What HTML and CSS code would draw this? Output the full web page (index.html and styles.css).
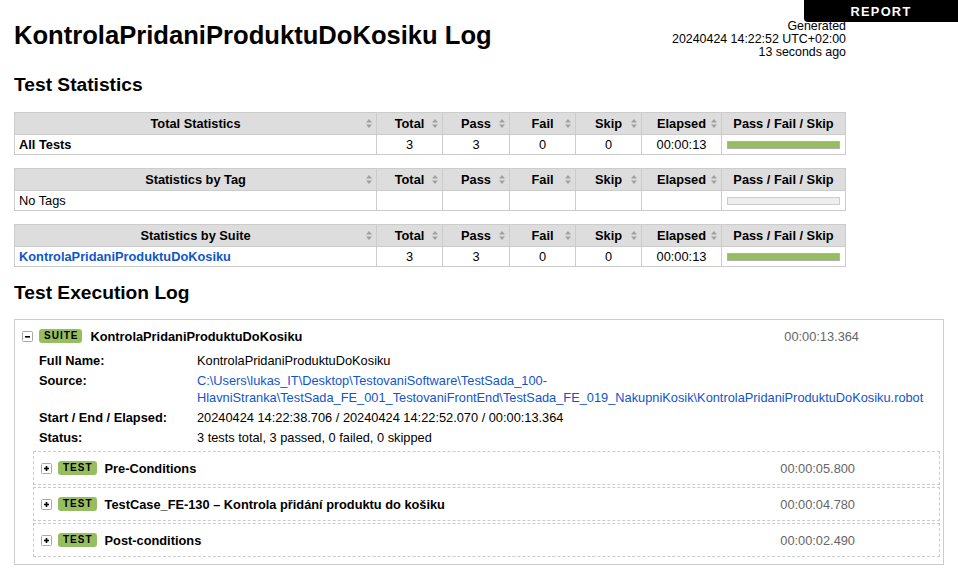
FILE: index.html
```html
<!DOCTYPE html>
<html lang="en">
<head>
<meta charset="utf-8">
<title>KontrolaPridaniProduktuDoKosiku Log</title>
<link rel="stylesheet" href="styles.css">
</head>
<body>
<div class="top-right"><a href="#" class="report-link">REPORT</a></div>

<header class="header">
  <h1 class="title">KontrolaPridaniProduktuDoKosiku Log</h1>
  <div class="generated">
    <div>Generated</div>
    <div>20240424 14:22:52 UTC+02:00</div>
    <div>13 seconds ago</div>
  </div>
</header>

<h2 class="section-title">Test Statistics</h2>

<table class="statistics">
  <colgroup><col><col class="c-total"><col class="c-pass"><col class="c-fail"><col class="c-skip"><col class="c-elapsed"><col class="c-graph"></colgroup>
  <thead>
    <tr><th class="sortable">Total Statistics</th><th class="sortable">Total</th><th class="sortable">Pass</th><th class="sortable">Fail</th><th class="sortable">Skip</th><th class="sortable">Elapsed</th><th>Pass / Fail / Skip</th></tr>
  </thead>
  <tbody>
    <tr><td class="stat-name bold">All Tests</td><td class="num">3</td><td class="num">3</td><td class="num">0</td><td class="num">0</td><td class="num">00:00:13</td><td class="graph-cell"><div class="graph pass"></div></td></tr>
  </tbody>
</table>

<table class="statistics">
  <colgroup><col><col class="c-total"><col class="c-pass"><col class="c-fail"><col class="c-skip"><col class="c-elapsed"><col class="c-graph"></colgroup>
  <thead>
    <tr><th class="sortable">Statistics by Tag</th><th class="sortable">Total</th><th class="sortable">Pass</th><th class="sortable">Fail</th><th class="sortable">Skip</th><th class="sortable">Elapsed</th><th>Pass / Fail / Skip</th></tr>
  </thead>
  <tbody>
    <tr><td class="stat-name">No Tags</td><td class="num"></td><td class="num"></td><td class="num"></td><td class="num"></td><td class="num"></td><td class="graph-cell"><div class="graph empty"></div></td></tr>
  </tbody>
</table>

<table class="statistics">
  <colgroup><col><col class="c-total"><col class="c-pass"><col class="c-fail"><col class="c-skip"><col class="c-elapsed"><col class="c-graph"></colgroup>
  <thead>
    <tr><th class="sortable">Statistics by Suite</th><th class="sortable">Total</th><th class="sortable">Pass</th><th class="sortable">Fail</th><th class="sortable">Skip</th><th class="sortable">Elapsed</th><th>Pass / Fail / Skip</th></tr>
  </thead>
  <tbody>
    <tr><td class="stat-name"><a href="#" class="link bold">KontrolaPridaniProduktuDoKosiku</a></td><td class="num">3</td><td class="num">3</td><td class="num">0</td><td class="num">0</td><td class="num">00:00:13</td><td class="graph-cell"><div class="graph pass"></div></td></tr>
  </tbody>
</table>

<h2 class="section-title log-title">Test Execution Log</h2>

<div class="suite">
  <div class="element-header">
    <svg class="toggle" width="11" height="11" viewBox="0 0 11 11"><rect x="0.5" y="0.5" width="10" height="10" rx="1" fill="#fff" stroke="#a8a8a8"/><rect x="3" y="5" width="5" height="1.6" fill="#000"/></svg>
    <span class="label pass">SUITE</span>
    <span class="name">KontrolaPridaniProduktuDoKosiku</span>
    <span class="elapsed">00:00:13.364</span>
  </div>
  <table class="metadata">
    <tr><th>Full Name:</th><td>KontrolaPridaniProduktuDoKosiku</td></tr>
    <tr><th>Source:</th><td><a href="#" class="link">C:\Users\lukas_IT\Desktop\TestovaniSoftware\TestSada_100-HlavniStranka\TestSada_FE_001_TestovaniFrontEnd\TestSada_FE_019_NakupniKosik\KontrolaPridaniProduktuDoKosiku.robot</a></td></tr>
    <tr><th>Start / End / Elapsed:</th><td>20240424 14:22:38.706 / 20240424 14:22:52.070 / 00:00:13.364</td></tr>
    <tr><th>Status:</th><td>3 tests total, 3 passed, 0 failed, 0 skipped</td></tr>
  </table>
  <div class="children">
    <div class="test">
      <div class="element-header">
        <svg class="toggle" width="11" height="11" viewBox="0 0 11 11"><rect x="0.5" y="0.5" width="10" height="10" rx="1" fill="#fff" stroke="#a8a8a8"/><rect x="3" y="4.7" width="5" height="1.6" fill="#000"/><rect x="4.7" y="3" width="1.6" height="5" fill="#000"/></svg>
        <span class="label pass">TEST</span>
        <span class="name">Pre-Conditions</span>
        <span class="elapsed">00:00:05.800</span>
      </div>
    </div>
    <div class="test">
      <div class="element-header">
        <svg class="toggle" width="11" height="11" viewBox="0 0 11 11"><rect x="0.5" y="0.5" width="10" height="10" rx="1" fill="#fff" stroke="#a8a8a8"/><rect x="3" y="4.7" width="5" height="1.6" fill="#000"/><rect x="4.7" y="3" width="1.6" height="5" fill="#000"/></svg>
        <span class="label pass">TEST</span>
        <span class="name">TestCase_FE-130 – Kontrola přidání produktu do košiku</span>
        <span class="elapsed">00:00:04.780</span>
      </div>
    </div>
    <div class="test">
      <div class="element-header">
        <svg class="toggle" width="11" height="11" viewBox="0 0 11 11"><rect x="0.5" y="0.5" width="10" height="10" rx="1" fill="#fff" stroke="#a8a8a8"/><rect x="3" y="4.7" width="5" height="1.6" fill="#000"/><rect x="4.7" y="3" width="1.6" height="5" fill="#000"/></svg>
        <span class="label pass">TEST</span>
        <span class="name">Post-conditions</span>
        <span class="elapsed">00:00:02.490</span>
      </div>
    </div>
  </div>
</div>
</body>
</html>
```
FILE: styles.css
```css
html, body {
  margin: 0;
  padding: 0;
}
body {
  background: #fff;
  color: #000;
  font-family: "Liberation Sans", Arial, Helvetica, sans-serif;
  font-size: 12.8px;
  line-height: 15px;
  padding: 0 14px 14px 14px;
}
a.link {
  color: #15c;
  text-decoration: none;
}
.bold {
  font-weight: bold;
}

/* top-right report link */
.top-right {
  position: fixed;
  top: 0;
  right: 0;
  width: 154px;
  z-index: 10;
}
.report-link {
  display: block;
  background: #000;
  color: #fff;
  text-decoration: none;
  text-align: center;
  font-weight: bold;
  font-size: 12.8px;
  letter-spacing: 0.1em;
  line-height: 15px;
  padding: 4px 0 3px 0;
  border-bottom-left-radius: 4px;
}

/* header */
.header {
  width: 832px;
  display: flex;
  justify-content: space-between;
  align-items: flex-start;
  padding-top: 20px;
}
.title {
  margin: 0;
  font-size: 25.6px;
  line-height: 30px;
  font-weight: bold;
}
.generated {
  font-size: 12.4px;
  line-height: 13px;
  text-align: right;
  white-space: nowrap;
}

.section-title {
  margin: 15px 0 16px 0;
  font-size: 19.2px;
  line-height: 22px;
  font-weight: bold;
}
.log-title {
  margin: 15px 0 15px 0;
}

/* statistics tables */
.statistics {
  width: 832px;
  border-collapse: collapse;
  table-layout: fixed;
  margin-bottom: 13px;
}
.statistics th,
.statistics td {
  border: 1px solid #ccc;
  line-height: 15px;
  white-space: nowrap;
  overflow: hidden;
}
.statistics th {
  background-color: #ddd;
  padding: 3px 4px;
  font-weight: bold;
  text-align: center;
}
.statistics th.sortable {
  background: #ddd url("data:image/svg+xml,%3Csvg xmlns='http://www.w3.org/2000/svg' width='6' height='9'%3E%3Cpath d='M3 0L6 3.5H0Z M0 5.5H6L3 9Z' fill='%23a0a0a0'/%3E%3C/svg%3E") no-repeat right 4px center;
}
.statistics td {
  padding: 2px 4px;
}
.statistics td.stat-name {
  padding-left: 4px;
  text-align: left;
}
.statistics td.num {
  text-align: center;
}
.c-total { width: 66px; }
.c-pass { width: 67px; }
.c-fail { width: 66px; }
.c-skip { width: 66px; }
.c-elapsed { width: 80px; }
.c-graph { width: 124px; }

.statistics td.graph-cell {
  padding: 2px 5px;
}
.graph {
  height: 6px;
  border: 1px solid #ccc;
  background: #eee;
  margin: 3px 0;
}
.graph.pass {
  background: #97bd61;
  border-color: #b0b0b0;
}

/* execution log */
.suite {
  border: 1px solid #ccc;
  padding: 0 3px 7px 0;
}
.element-header {
  display: flex;
  align-items: center;
  height: 20px;
  padding: 0 81px 0 7px;
}
.suite > .element-header {
  margin-top: 6px;
}
.test > .element-header {
  padding-right: 84px;
}
.toggle {
  flex: none;
  display: block;
  margin-right: 6px;
}
.label {
  flex: none;
  font-size: 10px;
  font-weight: bold;
  letter-spacing: 1px;
  line-height: 14px;
  padding: 0 4px 0 5px;
  border-radius: 3px;
  color: #000;
  background: #ddd;
}
.label.pass {
  background: #97bd61;
}
.name {
  font-weight: bold;
  margin-left: 8px;
  white-space: nowrap;
}
.elapsed {
  margin-left: auto;
  color: #666;
  white-space: nowrap;
}

.metadata {
  border-collapse: collapse;
  margin: 5px 0 0 24px;
  width: calc(100% - 24px);
}
.metadata th,
.metadata td {
  padding: 1px 0 2px 0;
  line-height: 17px;
  vertical-align: top;
  text-align: left;
}
.metadata th {
  width: 158px;
  font-weight: bold;
  white-space: nowrap;
}

.children {
  margin: 3px 0 0 18px;
  display: flex;
  flex-direction: column;
  gap: 2px;
}
.test {
  border: 1px dashed #ccc;
  padding: 6px 0;
}
```
